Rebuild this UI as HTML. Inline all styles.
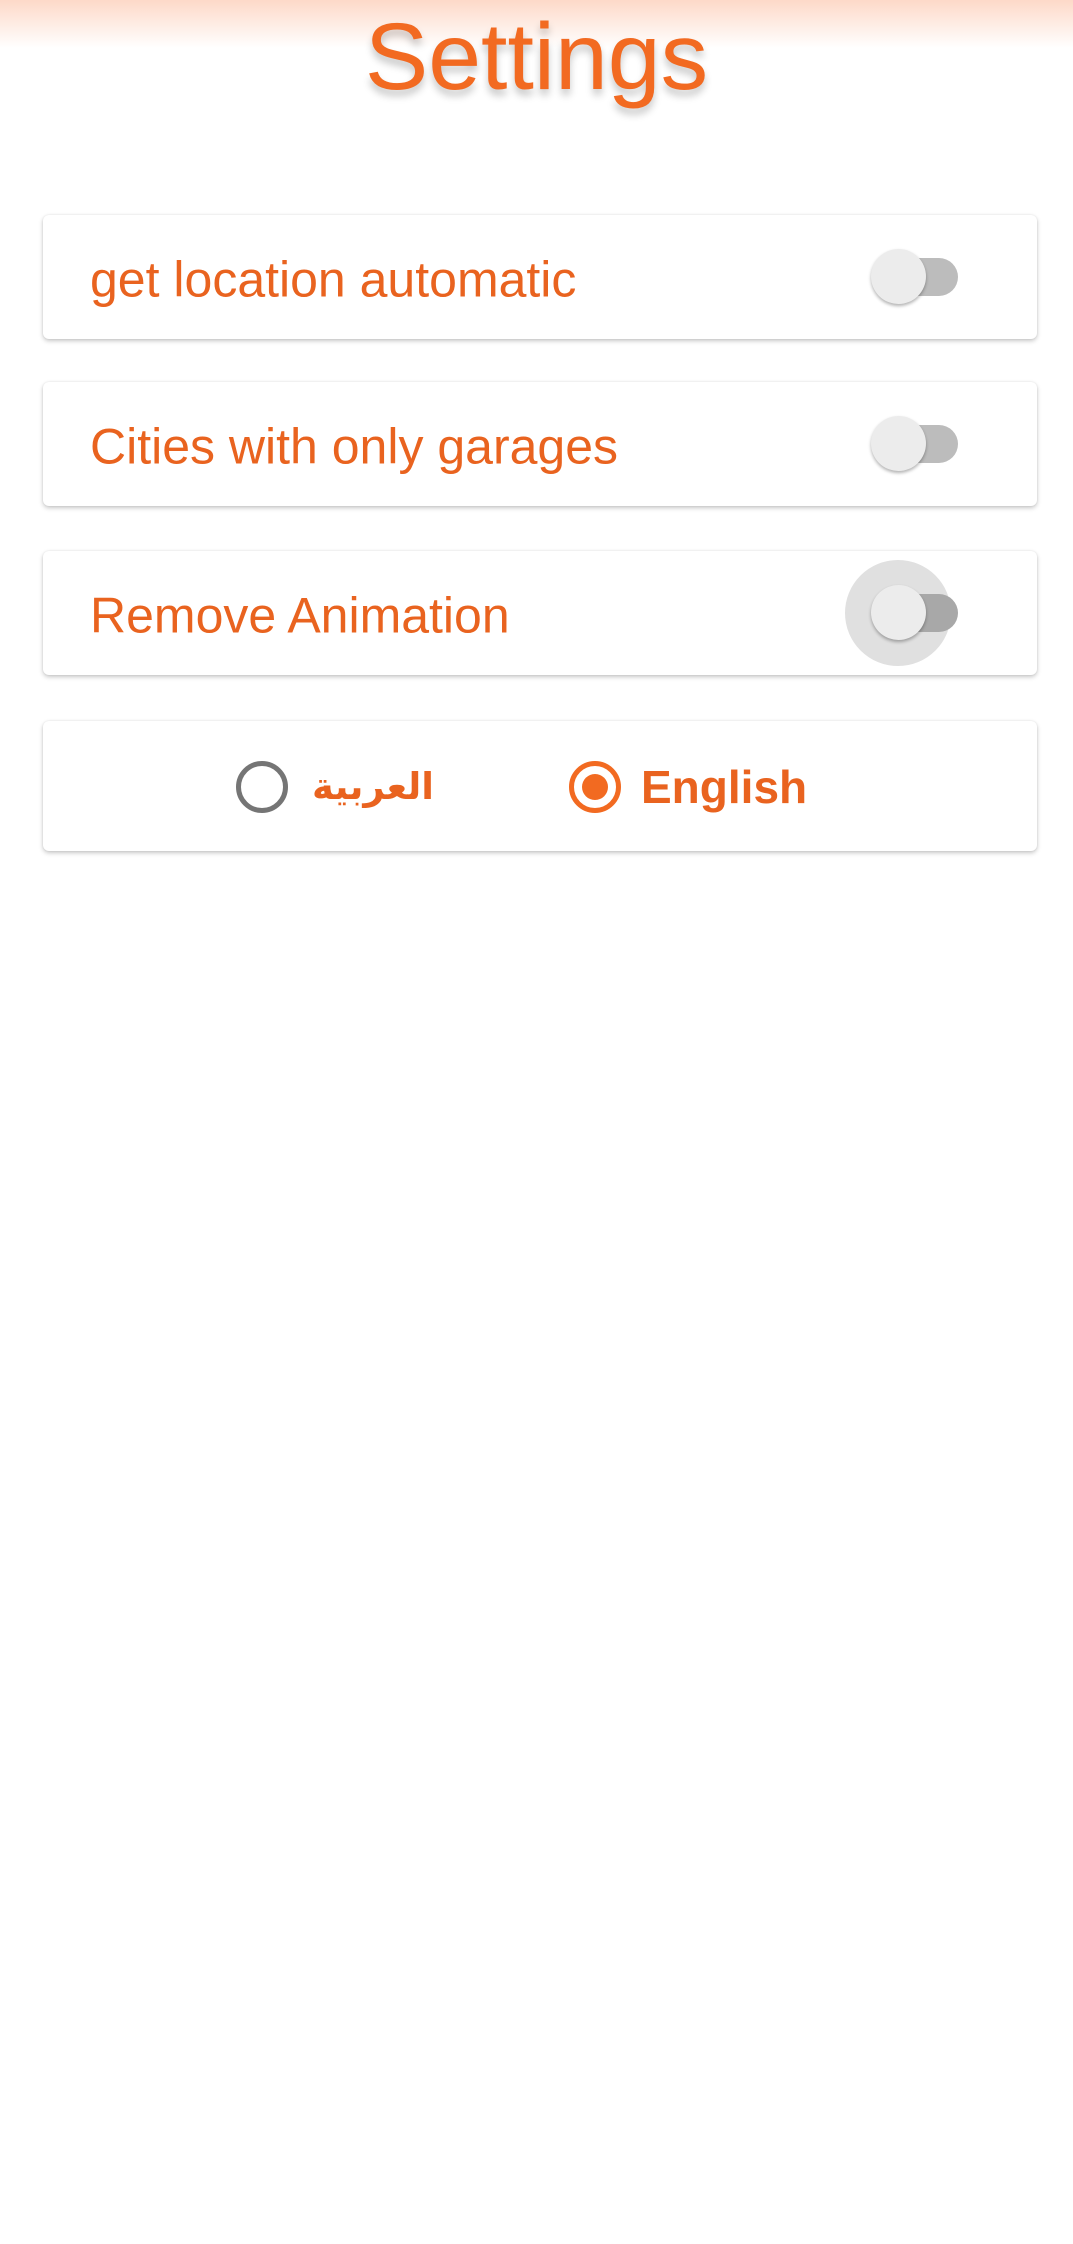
<!DOCTYPE html>
<html><head><meta charset="utf-8"><style>
*{margin:0;padding:0;box-sizing:border-box}
body{width:1073px;height:2244px;background:#fff;font-family:"Liberation Sans",sans-serif;position:relative;overflow:hidden}
.hdr{position:absolute;left:0;top:0;width:1073px;height:48px;background:linear-gradient(#fdd9c8,#fff)}
.title{position:absolute;left:0;width:1073px;top:7px;text-align:center;font-size:95px;color:#f26a21;text-shadow:0 6px 8px rgba(0,0,0,.22);line-height:100px}
.card{position:absolute;left:43px;width:994px;background:#fff;border-radius:6px;box-shadow:0 2px 5px rgba(0,0,0,.22),0 0 2px rgba(0,0,0,.08)}
.lbl{position:absolute;left:47px;font-size:50px;color:#e9631f;top:50%;transform:translateY(-46%)}
.track{position:absolute;left:833px;width:82px;height:38px;border-radius:19px;background:#bcbcbc;top:50%;margin-top:-19px}
.thumb{position:absolute;left:828px;width:55px;height:55px;border-radius:50%;background:#ececec;top:50%;margin-top:-28px;box-shadow:0 2px 3px rgba(0,0,0,.3)}
.ripple{position:absolute;left:802px;width:106px;height:106px;border-radius:50%;background:#e0e0e0;top:50%;margin-top:-53px}
</style></head><body>
<div class="hdr"></div>
<div class="title">Settings</div>
<div class="card" style="top:215px;height:124px"><div class="lbl">get location automatic</div><div class="track"></div><div class="thumb"></div></div>
<div class="card" style="top:382px;height:124px"><div class="lbl">Cities with only garages</div><div class="track"></div><div class="thumb"></div></div>
<div class="card" style="top:551px;height:124px"><div class="lbl">Remove Animation</div><div class="ripple"></div><div class="track" style="background:#a8a8a8"></div><div class="thumb"></div></div>
<div class="card" style="top:721px;height:130px">
<div style="position:absolute;left:193px;top:40px;width:52px;height:52px;border-radius:50%;border:5px solid #757575"></div>
<div style="position:absolute;left:269px;top:44px;font-size:37px;font-weight:bold;color:#e9631f;font-family:'Liberation Sans','DejaVu Sans',sans-serif;direction:rtl">العربية</div>
<div style="position:absolute;left:526px;top:40px;width:52px;height:52px;border-radius:50%;border:5px solid #f26a21"></div>
<div style="position:absolute;left:539px;top:53px;width:26px;height:26px;border-radius:50%;background:#f26a21"></div>
<div style="position:absolute;left:598px;top:39px;font-size:46px;font-weight:bold;color:#e9631f">English</div>
</div>
</body></html>
